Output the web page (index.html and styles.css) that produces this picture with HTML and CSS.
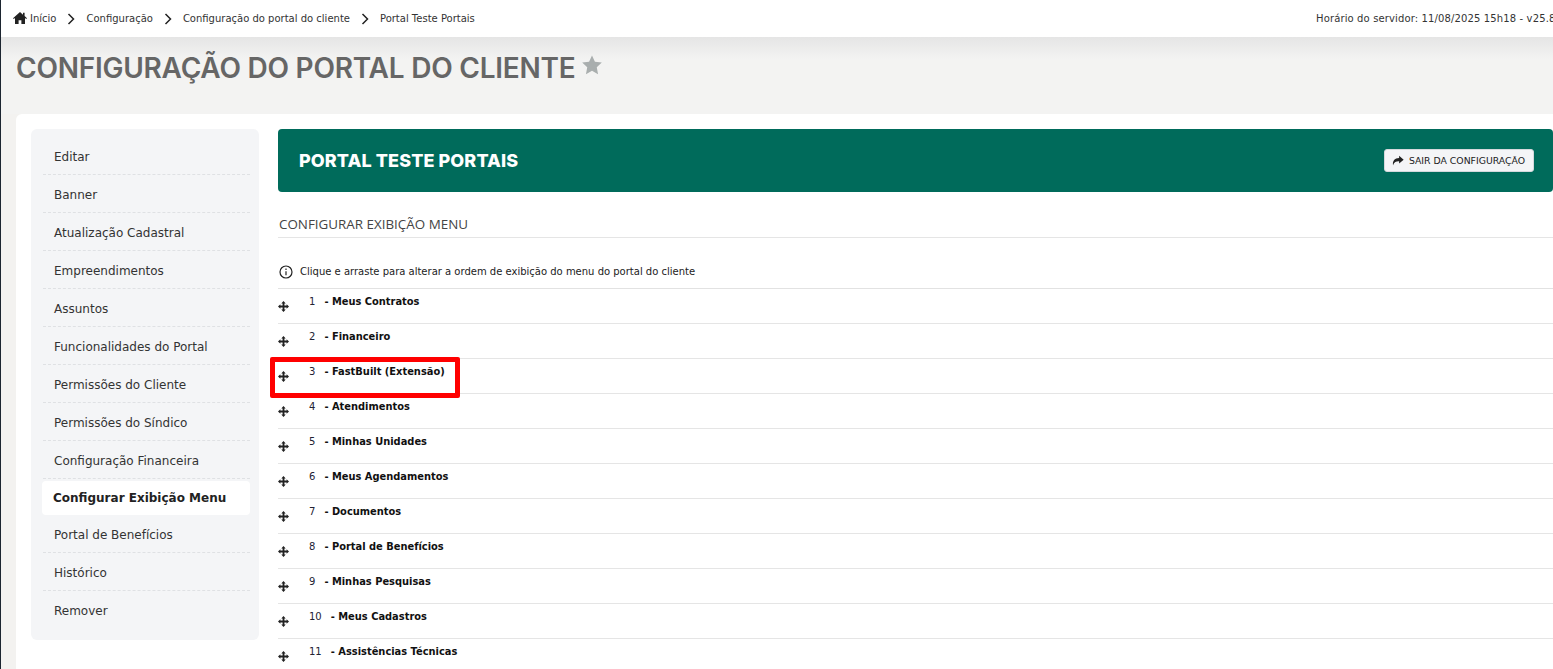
FILE: index.html
```html
<!DOCTYPE html>
<html lang="pt-BR">
<head>
<meta charset="utf-8">
<title>Configuração do portal do cliente</title>
<link rel="stylesheet" href="styles.css">
</head>
<body>
<div class="page">
  <header class="topbar">
    <nav class="crumbs">
      <svg class="home" viewBox="0 0 14 12"><path d="M7 0 0 6.2l.8.8L2 6v6h3.6V8.2h2.8V12H12V6l1.2 1 .8-.8-2.4-2.1V.8H10v1.9z"/></svg>
      <span>Início</span>
      <svg class="chev" viewBox="0 0 9 12"><path d="M1.5 1l5 5-5 5"/></svg>
      <span>Configuração</span>
      <svg class="chev" viewBox="0 0 9 12"><path d="M1.5 1l5 5-5 5"/></svg>
      <span>Configuração do portal do cliente</span>
      <svg class="chev" viewBox="0 0 9 12"><path d="M1.5 1l5 5-5 5"/></svg>
      <span>Portal Teste Portais</span>
    </nav>
    <div class="server">Horário do servidor: 11/08/2025 15h18 - v25.8</div>
  </header>
  <section class="titlebar">
    <h1>CONFIGURAÇÃO DO PORTAL DO CLIENTE</h1>
    <svg class="star" viewBox="0 0 24 24"><path d="M12 1.5l3.2 6.9 7.5.9-5.5 5.2 1.4 7.5L12 18.3l-6.6 3.7 1.4-7.5L1.3 9.3l7.5-.9z"/></svg>
  </section>
  <main class="content">
    <aside class="side">
      <a class="item">Editar</a>
      <a class="item">Banner</a>
      <a class="item">Atualização Cadastral</a>
      <a class="item">Empreendimentos</a>
      <a class="item">Assuntos</a>
      <a class="item">Funcionalidades do Portal</a>
      <a class="item">Permissões do Cliente</a>
      <a class="item">Permissões do Síndico</a>
      <a class="item">Configuração Financeira</a>
      <a class="active">Configurar Exibição Menu</a>
      <a class="item">Portal de Benefícios</a>
      <a class="item">Histórico</a>
      <a class="item last">Remover</a>
    </aside>
    <div class="main">
      <div class="banner">
        <h2>PORTAL TESTE PORTAIS</h2>
        <button class="exit"><svg viewBox="0 0 14 12"><path d="M8.3.4 13.6 5 8.3 9.6V6.9C5 6.8 2.6 7.5 1.2 11.4.4 6.6 3 3.2 8.3 3z"/></svg>SAIR DA CONFIGURAÇÃO</button>
      </div>
      <h3>CONFIGURAR EXIBIÇÃO MENU</h3>
      <p class="hint"><svg viewBox="0 0 14 14"><circle cx="7" cy="7" r="6"/><path d="M7 6.2v4M7 3.4v1.6"/></svg>Clique e arraste para alterar a ordem de exibição do menu do portal do cliente</p>
      <ul class="rows">
        <li><svg class="move" viewBox="0 0 12 12"><use href="#mv"/></svg><span class="num">1</span><b>- Meus Contratos</b></li>
        <li><svg class="move" viewBox="0 0 12 12"><use href="#mv"/></svg><span class="num">2</span><b>- Financeiro</b></li>
        <li><svg class="move" viewBox="0 0 12 12"><use href="#mv"/></svg><span class="num">3</span><b>- FastBuilt (Extensão)</b></li>
        <li><svg class="move" viewBox="0 0 12 12"><use href="#mv"/></svg><span class="num">4</span><b>- Atendimentos</b></li>
        <li><svg class="move" viewBox="0 0 12 12"><use href="#mv"/></svg><span class="num">5</span><b>- Minhas Unidades</b></li>
        <li><svg class="move" viewBox="0 0 12 12"><use href="#mv"/></svg><span class="num">6</span><b>- Meus Agendamentos</b></li>
        <li><svg class="move" viewBox="0 0 12 12"><use href="#mv"/></svg><span class="num">7</span><b>- Documentos</b></li>
        <li><svg class="move" viewBox="0 0 12 12"><use href="#mv"/></svg><span class="num">8</span><b>- Portal de Benefícios</b></li>
        <li><svg class="move" viewBox="0 0 12 12"><use href="#mv"/></svg><span class="num">9</span><b>- Minhas Pesquisas</b></li>
        <li><svg class="move" viewBox="0 0 12 12"><use href="#mv"/></svg><span class="num">10</span><b>- Meus Cadastros</b></li>
        <li><svg class="move" viewBox="0 0 12 12"><use href="#mv"/></svg><span class="num">11</span><b>- Assistências Técnicas</b></li>
      </ul>
    </div>
  </main>
  <div class="mark"></div>
  <svg class="defs" aria-hidden="true"><defs><path id="mv" d="M6 0l2.4 2.6H7V5h2.4V3.6L12 6 9.4 8.4V7H7v2.4h1.4L6 12 3.6 9.4H5V7H2.6v1.4L0 6l2.6-2.4V5H5V2.6H3.6z"/></defs></svg>
</div>
</body>
</html>
```
FILE: styles.css
```css
* { box-sizing: border-box; }
html, body { margin: 0; height: 100%; overflow: hidden; background: #fff; }
body { font-family: "DejaVu Sans", Verdana, sans-serif; color: #222; }
.page { position: relative; width: 1553px; height: 669px; overflow: hidden; border-left: 1px solid #1c2530; background: #f3f2f0; }
.topbar { height: 37px; display: flex; justify-content: space-between; align-items: center; padding: 0 0 0 12px; background: #fff; white-space: nowrap; }
.crumbs { display: flex; align-items: center; font-size: 10px; color: #333; }
.home { width: 14px; height: 12px; fill: #222; margin: -2px 3px 0 0; }
.chev { width: 9px; height: 12px; fill: none; stroke: #222; stroke-width: 1.5; margin: 0 10px 0 11px; }
.server { font-size: 10px; letter-spacing: .13px; color: #333; width: 237px; flex: none; overflow: hidden; }
.titlebar { height: 77px; display: flex; align-items: flex-start; padding: 14px 0 0 15px; background: linear-gradient(#e5e5e5, #f3f3f2 22px); }
h1 { margin: 0; font: 600 28px/34px Inter, sans-serif; letter-spacing: -.23px; color: #666; white-space: nowrap; }
.star { width: 22px; height: 22px; fill: #a9aeae; margin: 3px 0 0 5px; }
.content { display: flex; align-items: flex-start; gap: 19px; margin-left: 15px; padding: 15px 0 0 15px; background: #fff; border-radius: 6px 0 0 0; height: 555px; }
.side { width: 228px; height: 511px; flex: none; padding: 8px 9px 0 12px; background: #f4f5f7; border-radius: 6px; font-size: 12px; color: #333; }
.item { display: flex; align-items: center; height: 38px; padding: 2px 0 0 11px; border-bottom: 1px dashed #dfe1e4; }
.last { border-bottom: 0; }
.active { display: flex; align-items: center; height: 34px; margin: 2px 0 0 -1px; padding-left: 11px; background: #fff; border-radius: 4px; font-weight: 700; color: #222; }
.main { flex: 1; min-width: 0; }
.banner { height: 63px; display: flex; align-items: center; justify-content: space-between; padding: 0 19px 0 21px; background: #006b5b; border-radius: 4px; }
h2 { margin: 0; font: 800 18px/24px Inter, sans-serif; letter-spacing: .1px; color: #fff; }
.exit { display: flex; align-items: center; height: 23px; padding: 0 8px 0 7px; border: 1px solid #d5d8dc; border-radius: 3px; background: #f4f5f7; font: 9.3px "DejaVu Sans", sans-serif; color: #222; }
.exit svg { width: 12px; height: 11px; fill: #222; margin-right: 5px; }
h3 { margin: 0; height: 46px; padding: 24px 0 0 1px; border-bottom: 1px solid #e5e5e5; font: 400 13.4px/17px "Open Sans", sans-serif; color: #444; }
.hint { display: flex; align-items: center; height: 51px; margin: 0; padding: 17px 0 0 1px; border-bottom: 1px solid #e2e2e2; font-size: 10px; color: #222; }
.hint svg { width: 14px; height: 14px; margin-right: 7px; fill: none; stroke: #222; stroke-width: 1.2; }
.rows { list-style: none; margin: 0; padding: 0; }
.rows li { position: relative; display: flex; height: 35px; padding: 6px 0 0 31px; border-bottom: 1px solid #e5e5e5; font-size: 10px; line-height: 14px; color: #111; }
.move { position: absolute; left: 0; top: 12px; width: 11px; height: 11px; fill: #222; }
.num { margin-right: 9px; color: #223; }
.rows b { font-size: 9.9px; font-weight: 700; }
.mark { position: absolute; left: 269px; top: 357px; width: 190px; height: 41px; border: 5px solid #f00; border-radius: 2px; }
.defs { position: absolute; width: 0; height: 0; }
```
